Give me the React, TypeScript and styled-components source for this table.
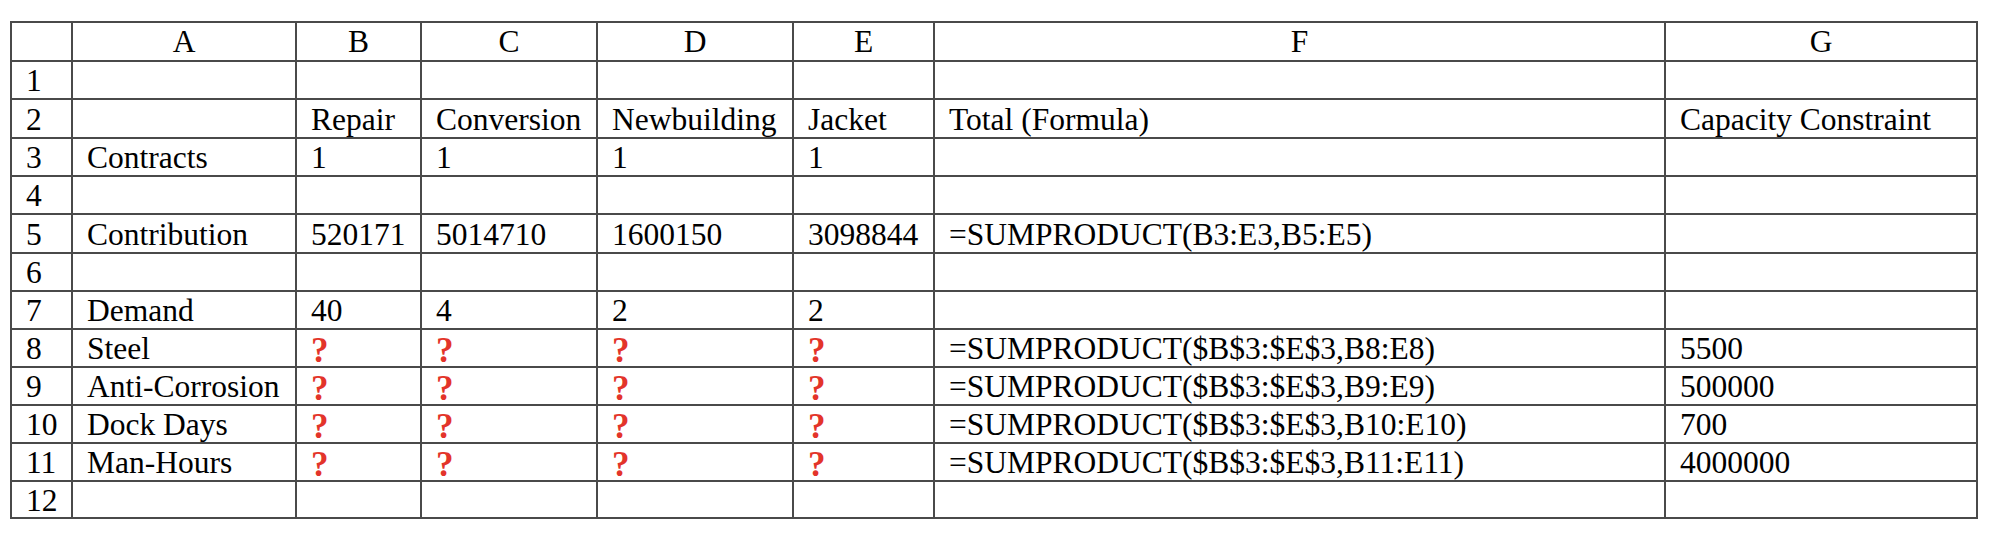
import React from "react";
import styled, { createGlobalStyle } from "styled-components";

const GlobalStyle = createGlobalStyle`
  html, body {
    margin: 0;
    padding: 0;
    background: #ffffff;
  }
  body {
    font-family: "Liberation Serif", "Times New Roman", serif;
    color: #000000;
  }
`;

const Page = styled.div`
  padding: 21px 0 0 10px;
  width: 1992px;
  height: 542px;
  box-sizing: border-box;
`;

const Sheet = styled.div`
  display: grid;
  grid-template-columns: 61px 224px 125px 176px 196px 141px 731px 312px;
  grid-template-rows: 39px 38px 39px 38px 38px 39px 38px 38px 38px 38px 38px 38px 37px;
  width: max-content;
  border-left: 2px solid #4a4a4a;
  border-top: 2px solid #4a4a4a;
`;

const Cell = styled.div<{ $header?: boolean }>`
  box-sizing: border-box;
  border-right: 2px solid #4a4a4a;
  border-bottom: 2px solid #4a4a4a;
  display: flex;
  align-items: center;
  justify-content: ${(p) => (p.$header ? "center" : "flex-start")};
  padding: ${(p) => (p.$header ? "0" : "2px 0 0 14px")};
  font-size: 31.5px;
  line-height: 1;
  white-space: nowrap;
  overflow: visible;
`;

const Ask = styled.span`
  color: #e3342a;
  font-weight: 700;
  font-size: 35px;
  padding-top: 2px;
`;

const Q = "__Q__";

const columns = ["", "A", "B", "C", "D", "E", "F", "G"];

const rows: string[][] = [
  ["", "", "", "", "", "", ""],
  ["", "Repair", "Conversion", "Newbuilding", "Jacket", "Total (Formula)", "Capacity Constraint"],
  ["Contracts", "1", "1", "1", "1", "", ""],
  ["", "", "", "", "", "", ""],
  ["Contribution", "520171", "5014710", "1600150", "3098844", "=SUMPRODUCT(B3:E3,B5:E5)", ""],
  ["", "", "", "", "", "", ""],
  ["Demand", "40", "4", "2", "2", "", ""],
  ["Steel", Q, Q, Q, Q, "=SUMPRODUCT($B$3:$E$3,B8:E8)", "5500"],
  ["Anti-Corrosion", Q, Q, Q, Q, "=SUMPRODUCT($B$3:$E$3,B9:E9)", "500000"],
  ["Dock Days", Q, Q, Q, Q, "=SUMPRODUCT($B$3:$E$3,B10:E10)", "700"],
  ["Man-Hours", Q, Q, Q, Q, "=SUMPRODUCT($B$3:$E$3,B11:E11)", "4000000"],
  ["", "", "", "", "", "", ""],
];

export default function App() {
  return (
    <>
      <GlobalStyle />
      <Page>
        <Sheet>
          {columns.map((c, i) => (
            <Cell key={`h${i}`} $header>
              {c}
            </Cell>
          ))}
          {rows.map((r, ri) => (
            <React.Fragment key={`r${ri}`}>
              <Cell>{ri + 1}</Cell>
              {r.map((v, ci) => (
                <Cell key={`c${ri}-${ci}`}>{v === Q ? <Ask>?</Ask> : v}</Cell>
              ))}
            </React.Fragment>
          ))}
        </Sheet>
      </Page>
    </>
  );
}
